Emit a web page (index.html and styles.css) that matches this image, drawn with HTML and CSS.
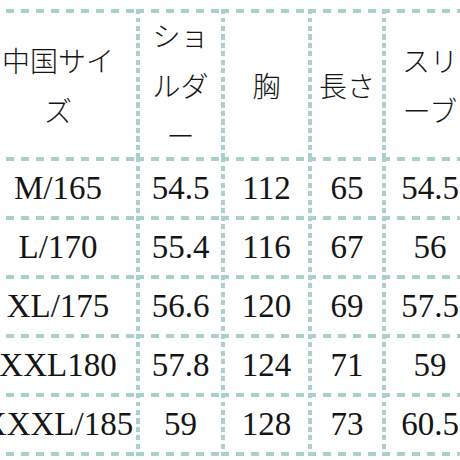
FILE: index.html
```html
<!DOCTYPE html>
<html lang="ja">
<head>
<meta charset="utf-8">
<title>サイズ表</title>
<link rel="stylesheet" href="styles.css">
</head>
<body>
<div class="sheet">
  <div class="cell head">中国サイ<br>ズ</div>
  <div class="cell head">ショ<br>ルダ<br>ー</div>
  <div class="cell head">胸</div>
  <div class="cell head">長さ</div>
  <div class="cell head">スリ<br>ーブ</div>

  <div class="cell num">M/165</div>
  <div class="cell num">54.5</div>
  <div class="cell num">112</div>
  <div class="cell num">65</div>
  <div class="cell num">54.5</div>

  <div class="cell num">L/170</div>
  <div class="cell num">55.4</div>
  <div class="cell num">116</div>
  <div class="cell num">67</div>
  <div class="cell num">56</div>

  <div class="cell num">XL/175</div>
  <div class="cell num">56.6</div>
  <div class="cell num">120</div>
  <div class="cell num">69</div>
  <div class="cell num">57.5</div>

  <div class="cell num">XXL180</div>
  <div class="cell num">57.8</div>
  <div class="cell num">124</div>
  <div class="cell num">71</div>
  <div class="cell num">59</div>

  <div class="cell num last">XXXL/185</div>
  <div class="cell num last">59</div>
  <div class="cell num last">128</div>
  <div class="cell num last">73</div>
  <div class="cell num last">60.5</div>
</div>
</body>
</html>
```

FILE: styles.css
```css
html, body {
  margin: 0;
  padding: 0;
  background: #ffffff;
  overflow: hidden;
}

.sheet {
  --line: #aacfcd;
  display: grid;
  grid-template-columns: 160px 85px 87px 74px 92px;
  grid-template-rows: 148px repeat(4, 59px) 63px;
  width: max-content;
  margin: 9px 0 0 -24px;
  color: #151515;
}

.cell {
  display: flex;
  align-items: center;
  justify-content: center;
  text-align: center;
  padding: 4px 0 0 4px;
  white-space: nowrap;
  background-image:
    repeating-linear-gradient(90deg, var(--line) 0 8px, transparent 8px 15px),
    repeating-linear-gradient(180deg, var(--line) 0 5px, transparent 5px 8.5px);
  background-size: 100% 4px, 4px 100%;
  background-position: 0 0, 0 0;
  background-repeat: no-repeat;
}

.num {
  font-family: "Liberation Serif", "Times New Roman", serif;
  font-size: 33px;
  font-weight: 400;
}

.head {
  font-family: "Noto Sans CJK JP", sans-serif;
  font-size: 28px;
  font-weight: 300;
  line-height: 50px;
}

.last {
  padding-bottom: 4px;
  background-image:
    repeating-linear-gradient(90deg, var(--line) 0 8px, transparent 8px 15px),
    repeating-linear-gradient(180deg, var(--line) 0 5px, transparent 5px 8.5px),
    repeating-linear-gradient(90deg, var(--line) 0 8px, transparent 8px 15px);
  background-size: 100% 4px, 4px 100%, 100% 4px;
  background-position: 0 0, 0 0, 0 100%;
}
```
